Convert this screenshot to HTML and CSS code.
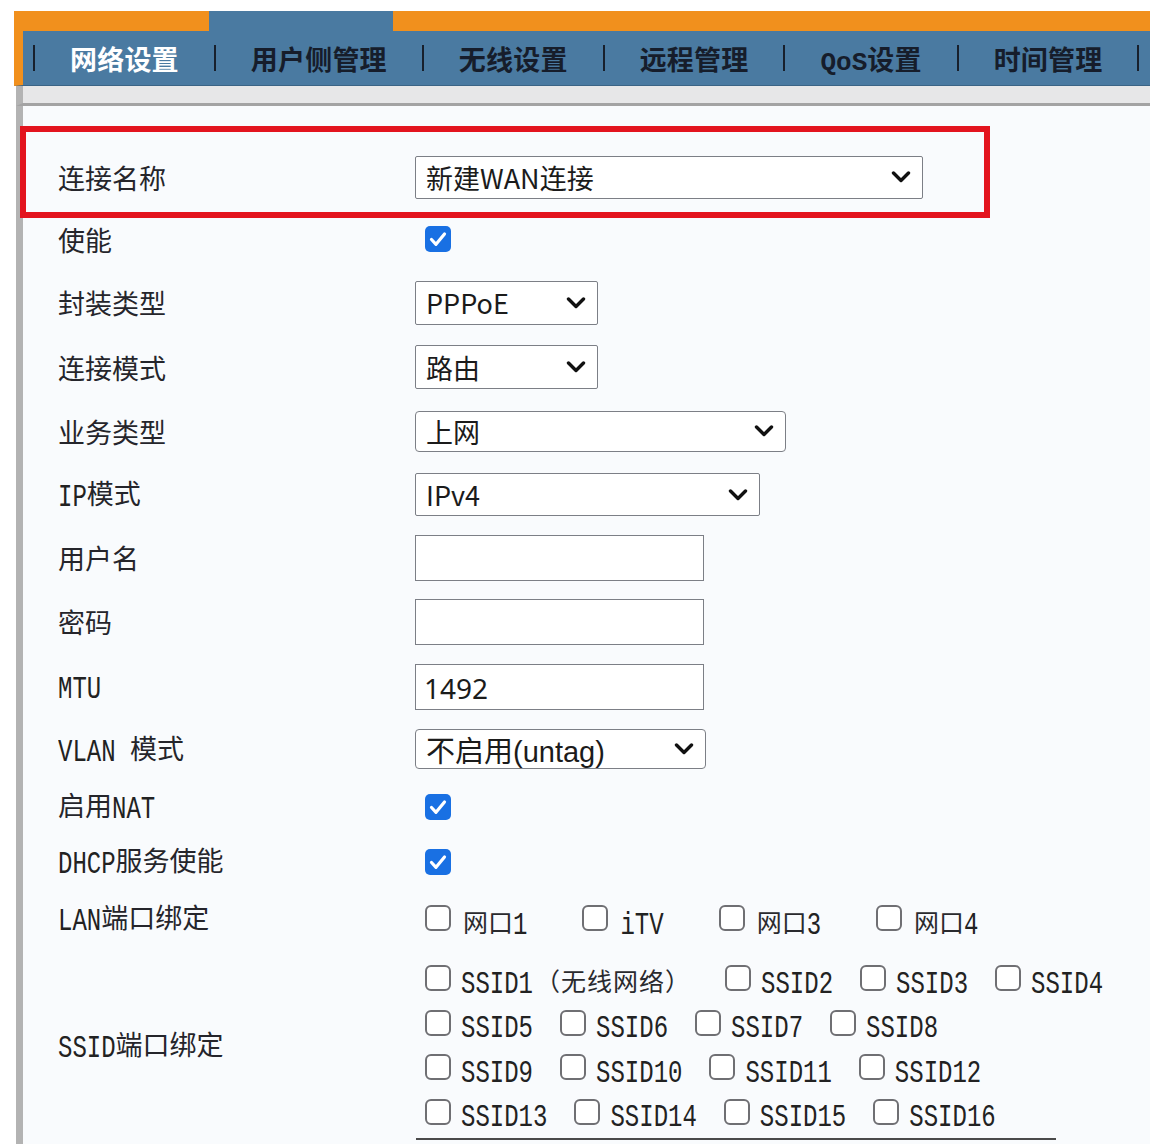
FILE: index.html
```html
<!DOCTYPE html>
<html lang="zh-CN">
<head>
    <meta charset="UTF-8">
    <title>网络设置 - WAN连接</title>
    <link rel="stylesheet" href="styles.css">
</head>
<body>

<div class="frame">
    <div class="tabstrip"><div class="tab-on"></div></div>

    <nav class="menu">
        <span class="sep"></span><a class="on">网络设置</a>
        <span class="sep"></span><a>用户侧管理</a>
        <span class="sep"></span><a>无线设置</a>
        <span class="sep"></span><a>远程管理</a>
        <span class="sep"></span><a><span class="q">QoS</span>设置</a>
        <span class="sep"></span><a>时间管理</a>
        <span class="sep"></span>
    </nav>

    <div class="subbar"></div>

    <div class="content">
        <div class="form">

            <div class="row r1">
                <span class="mark"></span>
                <div class="label">连接名称</div>
                <div class="field">
                    <div class="select s-conn"><span>新建WAN连接</span>
                        <svg class="chev" viewBox="0 0 20 12"><polyline points="2.5,2 10,9.5 17.5,2"/></svg></div>
                </div>
            </div>

            <div class="row r2">
                <div class="label">使能</div>
                <div class="field">
                    <svg class="cb-on" viewBox="0 0 26 26"><rect width="26" height="26" rx="5"/><path d="M6.5 13.5l4.5 4.8 8.5-10.3"/></svg>
                </div>
            </div>

            <div class="row r3">
                <div class="label">封装类型</div>
                <div class="field">
                    <div class="select s-short"><span>PPPoE</span>
                        <svg class="chev" viewBox="0 0 20 12"><polyline points="2.5,2 10,9.5 17.5,2"/></svg></div>
                </div>
            </div>

            <div class="row r4">
                <div class="label">连接模式</div>
                <div class="field">
                    <div class="select s-short"><span>路由</span>
                        <svg class="chev" viewBox="0 0 20 12"><polyline points="2.5,2 10,9.5 17.5,2"/></svg></div>
                </div>
            </div>

            <div class="row r5">
                <div class="label">业务类型</div>
                <div class="field">
                    <div class="select s-service"><span>上网</span>
                        <svg class="chev" viewBox="0 0 20 12"><polyline points="2.5,2 10,9.5 17.5,2"/></svg></div>
                </div>
            </div>

            <div class="row r6">
                <div class="label"><span class="en">IP</span>模式</div>
                <div class="field">
                    <div class="select s-ip"><span>IPv4</span>
                        <svg class="chev" viewBox="0 0 20 12"><polyline points="2.5,2 10,9.5 17.5,2"/></svg></div>
                </div>
            </div>

            <div class="row r7">
                <div class="label">用户名</div>
                <div class="field"><div class="input"></div></div>
            </div>

            <div class="row r8">
                <div class="label">密码</div>
                <div class="field"><div class="input"></div></div>
            </div>

            <div class="row r9">
                <div class="label"><span class="en">MTU</span></div>
                <div class="field"><div class="input">1492</div></div>
            </div>

            <div class="row r10">
                <div class="label"><span class="en">VLAN&nbsp;</span>模式</div>
                <div class="field">
                    <div class="select s-vlan"><span class="vlan-text">不启用(untag)</span>
                        <svg class="chev" viewBox="0 0 20 12"><polyline points="2.5,2 10,9.5 17.5,2"/></svg></div>
                </div>
            </div>

            <div class="row r11">
                <div class="label">启用<span class="en">NAT</span></div>
                <div class="field">
                    <svg class="cb-on" viewBox="0 0 26 26"><rect width="26" height="26" rx="5"/><path d="M6.5 13.5l4.5 4.8 8.5-10.3"/></svg>
                </div>
            </div>

            <div class="row r12">
                <div class="label"><span class="en">DHCP</span>服务使能</div>
                <div class="field">
                    <svg class="cb-on" viewBox="0 0 26 26"><rect width="26" height="26" rx="5"/><path d="M6.5 13.5l4.5 4.8 8.5-10.3"/></svg>
                </div>
            </div>

            <div class="row r13">
                <div class="label"><span class="en">LAN</span>端口绑定</div>
                <div class="field">
                    <div class="line lan">
                        <label class="opt"><span class="cb"></span><span class="txt">网口<span class="en">1</span></span></label>
                        <label class="opt"><span class="cb"></span><span class="txt"><span class="en">iTV</span></span></label>
                        <label class="opt"><span class="cb"></span><span class="txt">网口<span class="en">3</span></span></label>
                        <label class="opt"><span class="cb"></span><span class="txt">网口<span class="en">4</span></span></label>
                    </div>
                </div>
            </div>

            <div class="row r14">
                <div class="label"><span class="en">SSID</span>端口绑定</div>
                <div class="field">
                    <div class="line">
                        <label class="opt first"><span class="cb"></span><span class="txt"><span class="en">SSID1</span><span class="wide">（无线网络）</span></span></label>
                        <label class="opt"><span class="cb"></span><span class="txt"><span class="en">SSID2</span></span></label>
                        <label class="opt"><span class="cb"></span><span class="txt"><span class="en">SSID3</span></span></label>
                        <label class="opt"><span class="cb"></span><span class="txt"><span class="en">SSID4</span></span></label>
                    </div>
                    <div class="line">
                        <label class="opt"><span class="cb"></span><span class="txt"><span class="en">SSID5</span></span></label>
                        <label class="opt"><span class="cb"></span><span class="txt"><span class="en">SSID6</span></span></label>
                        <label class="opt"><span class="cb"></span><span class="txt"><span class="en">SSID7</span></span></label>
                        <label class="opt"><span class="cb"></span><span class="txt"><span class="en">SSID8</span></span></label>
                    </div>
                    <div class="line">
                        <label class="opt"><span class="cb"></span><span class="txt"><span class="en">SSID9</span></span></label>
                        <label class="opt"><span class="cb"></span><span class="txt"><span class="en">SSID10</span></span></label>
                        <label class="opt"><span class="cb"></span><span class="txt"><span class="en">SSID11</span></span></label>
                        <label class="opt"><span class="cb"></span><span class="txt"><span class="en">SSID12</span></span></label>
                    </div>
                    <div class="line">
                        <label class="opt"><span class="cb"></span><span class="txt"><span class="en">SSID13</span></span></label>
                        <label class="opt"><span class="cb"></span><span class="txt"><span class="en">SSID14</span></span></label>
                        <label class="opt"><span class="cb"></span><span class="txt"><span class="en">SSID15</span></span></label>
                        <label class="opt"><span class="cb"></span><span class="txt"><span class="en">SSID16</span></span></label>
                    </div>
                </div>
            </div>

        </div>
        <div class="endline"></div>
    </div>
</div>

</body>
</html>
```

FILE: styles.css
```css
body {
    margin: 0;
    padding: 0;
    background-color: #ffffff;
    color: #1f1f24;
    font-family: "Noto Sans CJK SC", "Noto Sans", sans-serif;
}
.frame {
    padding-top: 11px;
}
/* 顶部橙色条 + 当前标签 */
.tabstrip {
    margin-left: 14px;
    height: 20px;
    background-color: #f1901d;
}
.tab-on {
    margin-left: 195px;
    width: 184px;
    height: 100%;
    background-color: #4a7aa1;
}
.menu {
    margin-left: 14px;
    height: 54px;
    border-left: 9px solid #f1901d;
    border-bottom: 1px solid #3b6485;
    background-color: #4a7aa1;
    display: flex;
    align-items: center;
    gap: 35px;
    padding-left: 10px;
}
.menu a {
    font-size: 27px;
    font-weight: bold;
    color: #161d2b;
    letter-spacing: 0.2px;
    white-space: nowrap;
}
.menu a.on {
    color: #ffffff;
}
.menu .q {
    font-family: "Liberation Mono", monospace;
    font-size: 26px;
    letter-spacing: 0;
}
.sep {
    width: 2px;
    height: 26px;
    background-color: #18202c;
}
.subbar {
    margin-left: 16px;
    height: 17px;
    border-left: 7px solid #b3b3b3;
    border-bottom: 3px solid #a3a3a3;
    background-color: #e7e7e8;
}
.content {
    margin-left: 16px;
    border-left: 7px solid #b3b3b3;
    background-color: #f9fbfd;
    padding-bottom: 4px;
}
.form {
    padding-top: 40px;
    padding-left: 35px;
}
.row {
    display: flex;
    align-items: center;
    position: relative;
}
.r1 { height: 62px; }
.r2 { height: 62px; }
.r3 { height: 65px; }
.r4 { height: 64px; }
.r5 { height: 64px; }
.r6 { height: 63px; }
.r7 { height: 63px; }
.r8 { height: 65px; }
.r9 { height: 65px; }
.r10 { height: 60px; }
.r11 { height: 55px; }
.r12 { height: 55px; }
.r13 { height: 58px; }
.r14 { padding-top: 9px; }

/* 红色标注框 */
.mark {
    position: absolute;
    left: -38px;
    top: -20px;
    width: 970px;
    height: 92px;
    box-sizing: border-box;
    border: 6px solid #e3141e;
    z-index: 2;
}
.label {
    width: 357px;
    flex: none;
    font-size: 27px;
    line-height: 1;
    color: #25252b;
    white-space: nowrap;
}
.en {
    display: inline-block;
    font-family: "Liberation Mono", monospace;
    font-size: 24px;
    transform: scaleY(1.3);
    color: #222;
}
.field {
    flex: 1;
}
.select {
    box-sizing: border-box;
    display: flex;
    align-items: center;
    justify-content: space-between;
    border: 1px solid #7c7f86;
    border-radius: 2px;
    background-color: #ffffff;
    padding: 0 11px 0 10px;
    font-size: 27px;
    color: #1b1b1b;
}
.s-conn { width: 508px; height: 43px; }
.s-short { width: 183px; height: 44px; }
.s-service { width: 371px; height: 41px; border-radius: 4px; }
.s-ip { width: 345px; height: 43px; }
.s-vlan { width: 291px; height: 40px; border-radius: 4px; }
.vlan-text {
    font-family: "Liberation Sans", "Noto Sans CJK SC", sans-serif;
    font-size: 29px;
}
.chev {
    width: 20px;
    height: 12px;
    fill: none;
    stroke: #111;
    stroke-width: 3.4;
    stroke-linecap: round;
    stroke-linejoin: round;
}
.input {
    box-sizing: border-box;
    width: 289px;
    height: 46px;
    border: 1px solid #7c7f86;
    background-color: #ffffff;
    padding: 2px 8px 0;
    font-family: "Noto Sans", sans-serif;
    font-size: 28px;
    line-height: 42px;
    color: #1b1b1b;
}
.cb-on {
    display: block;
    width: 26px;
    height: 26px;
    margin-left: 10px;
}
.cb-on rect {
    fill: #1970e3;
}
.cb-on path {
    fill: none;
    stroke: #ffffff;
    stroke-width: 3.2;
    stroke-linecap: round;
    stroke-linejoin: round;
}
.line {
    display: flex;
    align-items: center;
    height: 44.5px;
    margin-left: 10px;
}
.opt {
    display: flex;
    align-items: center;
    gap: 10px;
    margin-right: 27px;
}
.opt.first {
    margin-right: 34px;
}
.lan .opt {
    gap: 12px;
    margin-right: 55px;
}
.lan .txt {
    padding-top: 10px;
}
.cb {
    box-sizing: border-box;
    width: 26px;
    height: 26px;
    border: 2px solid #6f6f73;
    border-radius: 6px;
    background-color: #ffffff;
    flex: none;
}
.txt {
    font-size: 25px;
    line-height: 1;
    padding-top: 8px;
    white-space: nowrap;
    color: #2a2a2e;
}
.wide {
    letter-spacing: 1px;
    padding-left: 2px;
}
.endline {
    margin-left: 393px;
    width: 640px;
    border-top: 2px solid #4a4a4a;
    margin-top: 4px;
}
```
